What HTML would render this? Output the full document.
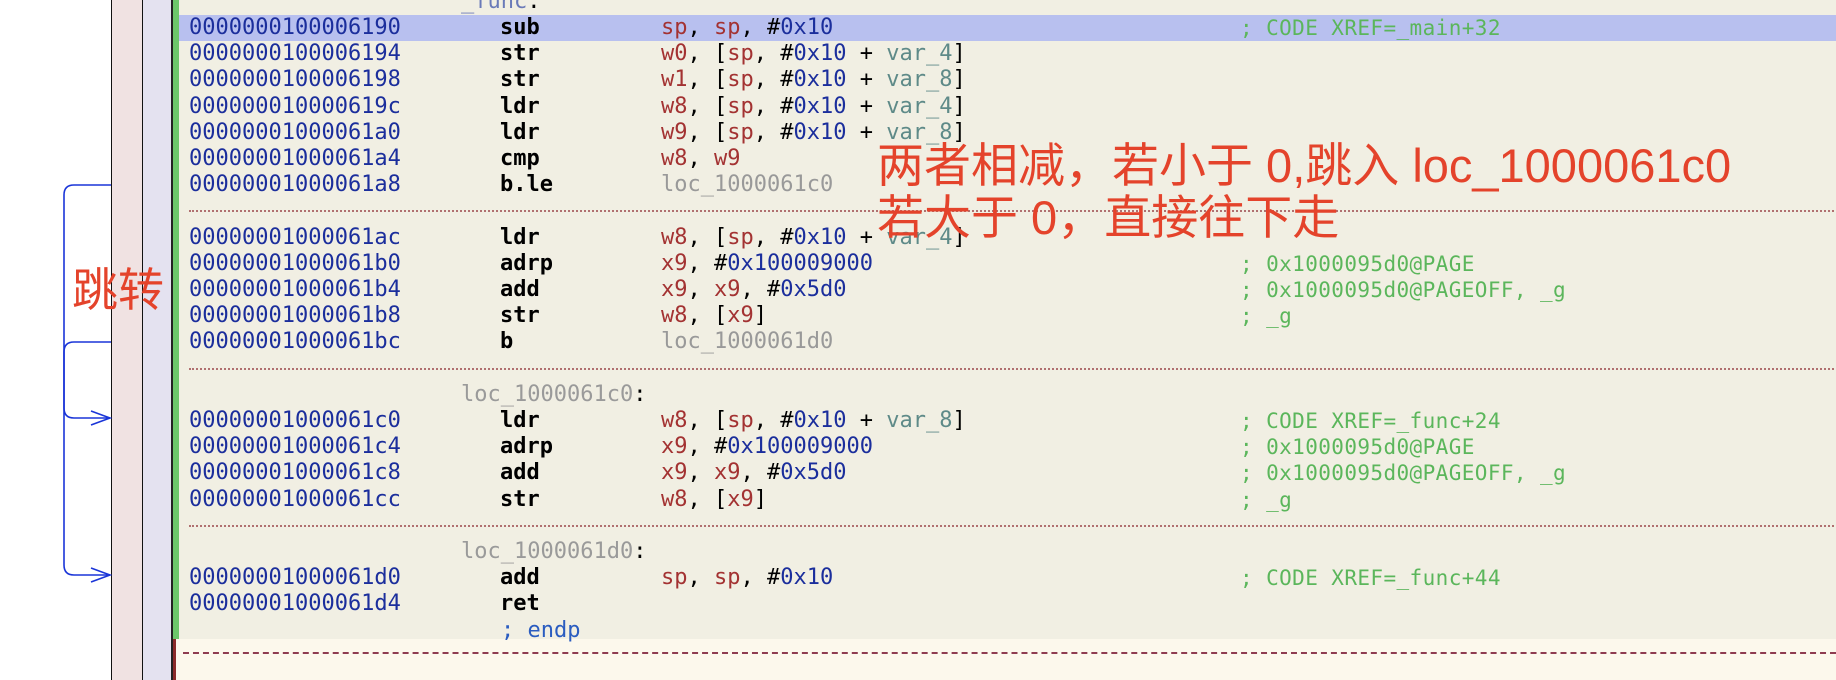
<!DOCTYPE html>
<html><head><meta charset="utf-8"><style>
*{margin:0;padding:0}
body{width:1836px;height:680px;overflow:hidden;background:#fff;position:relative;font-family:"DejaVu Sans Mono","Liberation Mono",monospace;}
.abs{position:absolute}
.code{position:absolute;left:173px;top:0;width:1663px;height:639px;background:#f1efe3;border-left:6px solid #6cc76a;box-sizing:border-box}
.row{position:absolute;left:0;width:1663px;height:26.2px;font-size:22px;line-height:26.2px;white-space:pre}
.row span{position:absolute;top:0}
.a{left:10px;color:#1b2e9c}
.m{left:321px;color:#000;font-weight:bold}
.o{left:482px;color:#000}
.c{left:1061px;color:#5bb65b;font-size:21px;letter-spacing:0.4px}
.lb{left:282px;color:#9a9a9a}
.r{color:#a33232}.n{color:#1b2e9c}.v{color:#5e8a88}.g{color:#999}
b{font-weight:normal}
.sep{border-top:2px dotted #b07070;position:absolute;left:10px;right:0;top:12px;height:0}
.hl{background:#b8c0ef}
.ann{position:absolute;color:#e4432b;font-family:"Liberation Sans","Noto Sans CJK SC",sans-serif;white-space:nowrap}
</style></head><body>
<div class="abs" style="left:111px;top:0;width:1px;height:680px;background:#111"></div>
<div class="abs" style="left:112px;top:0;width:30px;height:680px;background:#f0e2e2"></div>
<div class="abs" style="left:142px;top:0;width:1px;height:680px;background:#111"></div>
<div class="abs" style="left:143px;top:0;width:28px;height:680px;background:#e4e2f0"></div>
<div class="abs" style="left:171px;top:0;width:2px;height:680px;background:#222"></div>
<div class="abs" style="left:173px;top:639px;width:1663px;height:41px;background:#fcf8ec;border-left:3px solid #8a2a2a;box-sizing:border-box"></div>
<div class="abs" style="left:183px;top:652px;width:1653px;border-top:2px dashed #8e3c50"></div>
<div class="code">
<div class="row" style="top:-11.2px"><span class="lb" style="color:#6a7ab8">_func<span style="position:static;color:#000">:</span></span></div>
<div class="row hl" style="top:15px"><span class="a">0000000100006190</span><span class="m">sub</span><span class="o"><b class="r">sp</b>, <b class="r">sp</b>, #<b class="n">0x10</b></span><span class="c">; CODE XREF=_main+32</span></div>
<div class="row" style="top:41.2px"><span class="a">0000000100006194</span><span class="m">str</span><span class="o"><b class="r">w0</b>, [<b class="r">sp</b>, #<b class="n">0x10</b> + <b class="v">var_4</b>]</span></div>
<div class="row" style="top:67.4px"><span class="a">0000000100006198</span><span class="m">str</span><span class="o"><b class="r">w1</b>, [<b class="r">sp</b>, #<b class="n">0x10</b> + <b class="v">var_8</b>]</span></div>
<div class="row" style="top:93.6px"><span class="a">000000010000619c</span><span class="m">ldr</span><span class="o"><b class="r">w8</b>, [<b class="r">sp</b>, #<b class="n">0x10</b> + <b class="v">var_4</b>]</span></div>
<div class="row" style="top:119.8px"><span class="a">00000001000061a0</span><span class="m">ldr</span><span class="o"><b class="r">w9</b>, [<b class="r">sp</b>, #<b class="n">0x10</b> + <b class="v">var_8</b>]</span></div>
<div class="row" style="top:146px"><span class="a">00000001000061a4</span><span class="m">cmp</span><span class="o"><b class="r">w8</b>, <b class="r">w9</b></span></div>
<div class="row" style="top:172.2px"><span class="a">00000001000061a8</span><span class="m">b.le</span><span class="o g">loc_1000061c0</span></div>
<div class="row" style="top:198.4px"><div class="sep"></div></div>
<div class="row" style="top:224.6px"><span class="a">00000001000061ac</span><span class="m">ldr</span><span class="o"><b class="r">w8</b>, [<b class="r">sp</b>, #<b class="n">0x10</b> + <b class="v">var_4</b>]</span></div>
<div class="row" style="top:250.8px"><span class="a">00000001000061b0</span><span class="m">adrp</span><span class="o"><b class="r">x9</b>, #<b class="n">0x100009000</b></span><span class="c">; 0x1000095d0@PAGE</span></div>
<div class="row" style="top:277px"><span class="a">00000001000061b4</span><span class="m">add</span><span class="o"><b class="r">x9</b>, <b class="r">x9</b>, #<b class="n">0x5d0</b></span><span class="c">; 0x1000095d0@PAGEOFF, _g</span></div>
<div class="row" style="top:303.2px"><span class="a">00000001000061b8</span><span class="m">str</span><span class="o"><b class="r">w8</b>, [<b class="r">x9</b>]</span><span class="c">; _g</span></div>
<div class="row" style="top:329.4px"><span class="a">00000001000061bc</span><span class="m">b</span><span class="o g">loc_1000061d0</span></div>
<div class="row" style="top:355.6px"><div class="sep"></div></div>
<div class="row" style="top:381.8px"><span class="lb">loc_1000061c0<span style="position:static;color:#000">:</span></span></div>
<div class="row" style="top:408px"><span class="a">00000001000061c0</span><span class="m">ldr</span><span class="o"><b class="r">w8</b>, [<b class="r">sp</b>, #<b class="n">0x10</b> + <b class="v">var_8</b>]</span><span class="c">; CODE XREF=_func+24</span></div>
<div class="row" style="top:434.2px"><span class="a">00000001000061c4</span><span class="m">adrp</span><span class="o"><b class="r">x9</b>, #<b class="n">0x100009000</b></span><span class="c">; 0x1000095d0@PAGE</span></div>
<div class="row" style="top:460.4px"><span class="a">00000001000061c8</span><span class="m">add</span><span class="o"><b class="r">x9</b>, <b class="r">x9</b>, #<b class="n">0x5d0</b></span><span class="c">; 0x1000095d0@PAGEOFF, _g</span></div>
<div class="row" style="top:486.6px"><span class="a">00000001000061cc</span><span class="m">str</span><span class="o"><b class="r">w8</b>, [<b class="r">x9</b>]</span><span class="c">; _g</span></div>
<div class="row" style="top:512.8px"><div class="sep"></div></div>
<div class="row" style="top:539px"><span class="lb">loc_1000061d0<span style="position:static;color:#000">:</span></span></div>
<div class="row" style="top:565.2px"><span class="a">00000001000061d0</span><span class="m">add</span><span class="o"><b class="r">sp</b>, <b class="r">sp</b>, #<b class="n">0x10</b></span><span class="c">; CODE XREF=_func+44</span></div>
<div class="row" style="top:591.4px"><span class="a">00000001000061d4</span><span class="m">ret</span></div>
<div class="row" style="top:617.6px"><span style="left:322px;color:#2a5cc0">; endp</span></div>
</div>
<svg class="abs" style="left:0;top:0" width="180" height="680">
<g fill="none" stroke="#1a35d8" stroke-width="1.6">
<path d="M111 185 H74 Q64 185 64 195 V408 Q64 418 74 418 H110"/>
<path d="M91 411 L110 418 L91 425"/>
<path d="M111 342 H74 Q64 342 64 352 V565 Q64 575 74 575 H110"/>
<path d="M91 568 L110 575 L91 582"/>
</g>
</svg>
<div class="ann" style="left:72px;top:262px;font-size:46px;line-height:56px">跳转</div>
<div class="ann" style="left:877px;top:140px;font-size:47px;line-height:52px">两者相减，若小于 0,跳入 loc_1000061c0</div>
<div class="ann" style="left:877px;top:192px;font-size:47px;line-height:52px">若大于 0，直接往下走</div>
</body></html>
